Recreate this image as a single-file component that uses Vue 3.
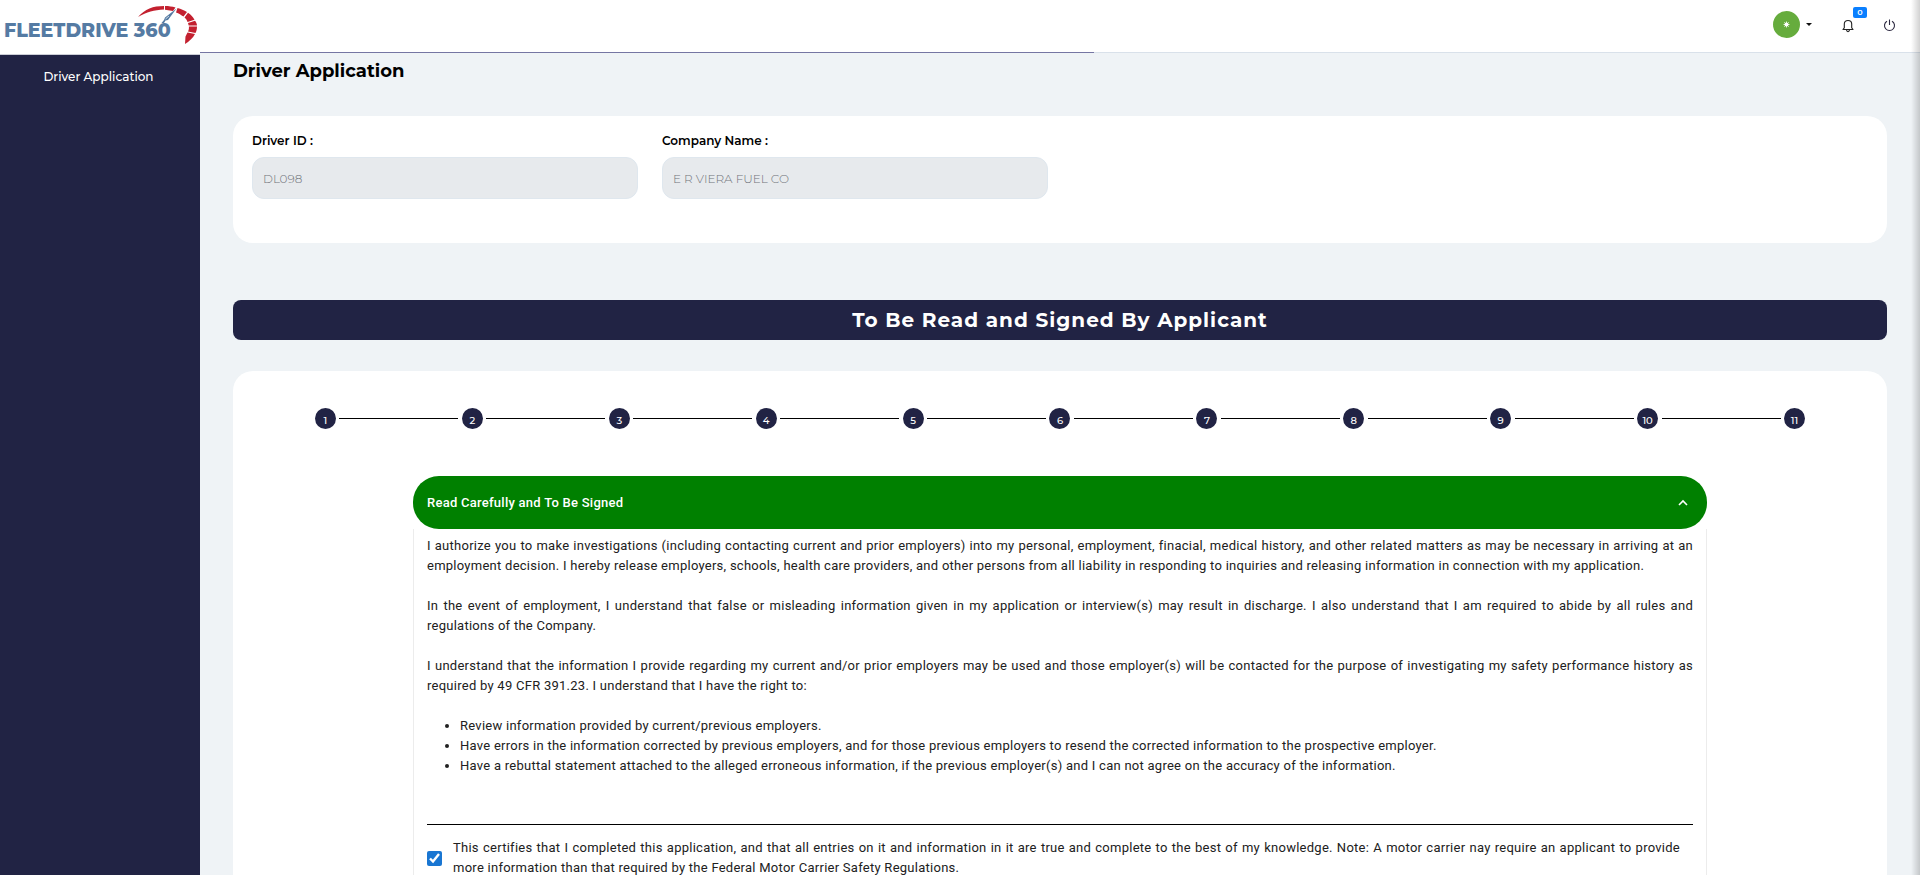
<script setup>
import { ref } from 'vue'

const steps = Array.from({ length: 11 }, (_, i) => i + 1)
const driverId = ref('DL098')
const company = ref('E R VIERA FUEL CO')
const certified = ref(true)
const open = ref(true)
</script>

<template>
  <div class="shell">
    <aside class="sidebar">
      <a class="brand" href="#">
        <span class="brand-name">FLEETDRIVE 360</span>
        <svg class="gauge" viewBox="136 4 64 42" width="64" height="42" aria-hidden="true">
          <path d="M138 17 C145 9 153 6 164 6 L164 9.500 C154 10 147 12 138 17Z" fill="#c3202f" />
          <path d="M165 6 C169 6 172 6.500 175.500 7.500 L173 11 L165 9.700Z" fill="#c3202f" />
          <path d="M177.500 8 C181 9 184 10 187 12 L183.500 16.500 C181 15 179 13.500 176 12.500Z" fill="#c3202f" />
          <path d="M188 12.700 C191 14.500 193 17 194.500 19.700 L187.500 22 C187 20 186 19 184.500 17.500Z" fill="#c3202f" />
          <path d="M195 20.700 C196 22 197 24 197 25.500 L188.700 25.500 L188 23Z" fill="#c3202f" />
          <path d="M197 26.500 C197 29 196.500 31 195.500 33 L188 31.500 C189 30 189 28 188.900 26.500Z" fill="#c3202f" />
          <path d="M195 34 C193 38 189 41.500 185 44 L185.500 36.500 L187.500 32.500Z" fill="#c3202f" />
          <path d="M176.500 8.500 L168 20 L165.500 20.500 L164 23 L161.500 23 L164 20 L165 17.500Z" fill="#557ba3" />
          <path d="M165.500 19 L169 16" stroke="#fff" stroke-width=".7" />
        </svg>
      </a>
      <nav class="menu">
        <a href="#" class="menu-link">Driver Application</a>
      </nav>
    </aside>

    <div class="content">
      <header class="topbar">
        <div class="tools">
          <button class="account" type="button" aria-label="Account">
            <span class="avatar">
              <svg viewBox="0 0 27 27" width="27" height="27">
                <circle cx="13.5" cy="13.5" r="2" fill="#fff" />
                <path d="M13.5 10.5v6M10.5 13.5h6M11.3 11.3l4.4 4.4M15.7 11.3l-4.4 4.4" stroke="#fff" stroke-width="1" opacity=".8" />
              </svg>
            </span>
            <svg class="caret" viewBox="0 0 6 3" width="6" height="3"><path d="M0 0h6L3 3z" fill="#111" /></svg>
          </button>
          <button class="bell" type="button" aria-label="Notifications">
            <svg viewBox="0 0 12 14" width="12" height="14" fill="none" stroke="#222" stroke-width="1.1">
              <path d="M1 10.5h10L9.7 8.7V5C9.700 2.800 8.300 1.500 6 1.500S2.300 2.800 2.300 5v3.700z" stroke-linejoin="round" />
              <path d="M4.500 11c.2 1.200.8 1.600 1.500 1.600s1.300-.4 1.500-1.600" />
            </svg>
            <span class="badge">0</span>
          </button>
          <button class="power" type="button" aria-label="Log out">
            <svg viewBox="0 0 13 13" width="13" height="13" fill="none" stroke="#2c2840" stroke-width="1.1">
              <path d="M4 2.200A5 5 0 1 0 9 2.200" />
              <path d="M6.500 .5v5.500" />
            </svg>
          </button>
        </div>
        <div class="progress"><div class="progress-bar"></div></div>
      </header>

      <main class="page">
        <h1 class="title">Driver Application</h1>

        <section class="card info">
          <div class="field">
            <label for="driver-id">Driver ID :</label>
            <input id="driver-id" v-model="driverId" type="text" disabled />
          </div>
          <div class="field">
            <label for="company">Company Name :</label>
            <input id="company" v-model="company" type="text" disabled />
          </div>
        </section>

        <h2 class="banner">To Be Read and Signed By Applicant</h2>

        <section class="card form">
          <ol class="steps">
            <li v-for="n in steps" :key="n" class="step">
              <span class="dot">{{ n }}</span>
            </li>
          </ol>

          <div class="panel">
            <button class="panel-head" type="button" :aria-expanded="open" @click="open = !open">
              <span>Read Carefully and To Be Signed</span>
              <svg viewBox="0 0 10 7" width="10" height="7" fill="none" stroke="#fff" stroke-width="1.6"><path d="M1 6l4-4 4 4" /></svg>
            </button>
            <div v-show="open" class="panel-body">
              <p>I authorize you to make investigations (including contacting current and prior employers) into my personal, employment, finacial, medical history, and other related matters as may be necessary in arriving at an employment decision. I hereby release employers, schools, health care providers, and other persons from all liability in responding to inquiries and releasing information in connection with my application.</p>
              <p>In the event of employment, I understand that false or misleading information given in my application or interview(s) may result in discharge. I also understand that I am required to abide by all rules and regulations of the Company.</p>
              <p>I understand that the information I provide regarding my current and/or prior employers may be used and those employer(s) will be contacted for the purpose of investigating my safety performance history as required by 49 CFR 391.23. I understand that I have the right to:</p>
              <ul>
                <li>Review information provided by current/previous employers.</li>
                <li>Have errors in the information corrected by previous employers, and for those previous employers to resend the corrected information to the prospective employer.</li>
                <li>Have a rebuttal statement attached to the alleged erroneous information, if the previous employer(s) and I can not agree on the accuracy of the information.</li>
              </ul>
              <hr />
              <div class="certify">
                <input id="certify" v-model="certified" type="checkbox" />
                <label for="certify">This certifies that I completed this application, and that all entries on it and information in it are true and complete to the best of my knowledge. Note: A motor carrier nay require an applicant to provide more information than that required by the Federal Motor Carrier Safety Regulations.</label>
              </div>
            </div>
          </div>
        </section>
      </main>
    </div>
    <div class="edge"></div>
  </div>
</template>

<style>
body {
  margin: 0;
  background: #eff3f6;
}
</style>

<style scoped>
* {
  box-sizing: border-box;
}
.shell {
  position: relative;
  display: flex;
  height: 100vh;
  overflow: hidden;
  background: #eff3f6;
  color: #000;
  font-family: Montserrat, Inter, sans-serif;
}
button {
  padding: 0;
  border: 0;
  background: none;
  font: inherit;
  cursor: pointer;
}
.sidebar {
  flex: 0 0 200px;
  display: flex;
  flex-direction: column;
  background: #212344;
}
.brand {
  position: relative;
  height: 55px;
  padding: 21px 0 0 4px;
  background: #fff;
  border-bottom: 1px solid #ccced6;
  color: #557ba3;
  font-size: 19px;
  font-weight: 800;
  line-height: 20px;
  text-decoration: none;
  white-space: nowrap;
}
.gauge {
  position: absolute;
  left: 136px;
  top: 4px;
}
.menu {
  padding-top: 11px;
  padding-right: 3px;
  text-align: center;
}
.menu-link {
  color: #fff;
  font-size: 12px;
  font-weight: 500;
  line-height: 20px;
  text-decoration: none;
}
.content {
  flex: 1;
  min-width: 0;
  display: flex;
  flex-direction: column;
}
.topbar {
  flex: none;
  background: #fff;
}
.tools {
  display: flex;
  justify-content: flex-end;
  align-items: center;
  height: 52px;
  padding: 0 24px 4px 0;
}
.account {
  display: flex;
  align-items: center;
  gap: 6px;
  margin-right: 30px;
}
.avatar {
  width: 27px;
  height: 27px;
  border-radius: 50%;
  background: #66ac3d;
}
.avatar svg,
.bell svg,
.power svg {
  display: block;
}
.bell {
  position: relative;
  margin: 3px 29px 0 0;
}
.badge {
  position: absolute;
  left: 11px;
  top: -12px;
  width: 14px;
  height: 11px;
  border-radius: 2px;
  background: #0a7fff;
  color: #fff;
  font-size: 8px;
  font-weight: 600;
  line-height: 10px;
  text-align: center;
}
.power {
  margin-top: 3px;
}
.progress {
  height: 1px;
  background: #d9e1ea;
}
.progress-bar {
  width: 52%;
  height: 1px;
  background: #7576a3;
}
.page {
  flex: 1;
  min-height: 0;
  padding: 6px 33px 0;
  overflow-y: auto;
  scrollbar-width: none;
}
.title {
  margin: 0 0 33px;
  font-size: 18px;
  font-weight: 700;
  line-height: 24px;
}
.card {
  background: #fff;
  border-radius: 20px;
}
.info {
  display: grid;
  grid-template-columns: repeat(4, 1fr);
  gap: 24px;
  height: 127px;
  padding: 15px 19px;
}
.field {
  display: flex;
  flex-direction: column;
  gap: 6px;
}
.field label {
  font-size: 12px;
  font-weight: 600;
  line-height: 20px;
}
.field input {
  width: 100%;
  height: 42px;
  padding: 0 10px;
  border: 1px solid #dfe7ee;
  border-radius: 12px;
  background: #e7eaed;
  color: #70747a;
  font: 300 12px/20px Montserrat, Inter, sans-serif;
}
.banner {
  margin: 57px 0 31px;
  border-radius: 8px;
  background: #212344;
  color: #fff;
  font-size: 20px;
  font-weight: 700;
  line-height: 40px;
  letter-spacing: 1px;
  text-align: center;
}
.form {
  padding: 37px 180px 60px;
}
.steps {
  display: flex;
  margin: 0 -161px 47px;
  padding: 0;
  list-style: none;
}
.step {
  position: relative;
  flex: 1;
  display: flex;
  justify-content: center;
}
.step:not(:last-child)::after {
  content: "";
  position: absolute;
  left: calc(50% + 14px);
  right: calc(14px - 50%);
  top: 10px;
  height: 1px;
  background: #000;
}
.dot {
  width: 21px;
  height: 21px;
  border-radius: 50%;
  background: #212344;
  color: #fff;
  font-size: 10px;
  font-weight: 500;
  line-height: 25px;
  text-align: center;
}
.panel {
  font-family: Roboto, sans-serif;
  font-size: 13px;
  line-height: 20px;
  letter-spacing: 0.02em;
  color: #212121;
}
.panel-head {
  display: flex;
  width: 100%;
  height: 53px;
  align-items: center;
  justify-content: space-between;
  padding: 0 19px 0 14px;
  border-radius: 26px;
  background: #008000;
  color: #fff;
  font-weight: 500;
  letter-spacing: inherit;
}
.panel-body {
  padding: 7px 13px 20px;
  border: 1px solid #ececec;
  border-top: 0;
}
.panel-body p {
  margin: 0 0 20px;
  text-align: justify;
}
.panel-body ul {
  margin: 0;
  padding: 0 0 0 33px;
}
.panel-body hr {
  margin: 48px 0 13px;
  border: 0;
  border-top: 1px solid #000;
}
.certify {
  display: flex;
  align-items: center;
  gap: 11px;
  padding-right: 13px;
}
.certify input {
  flex: none;
  width: 15px;
  height: 15px;
  margin: 0;
  accent-color: #1976d2;
}
.certify label {
  text-align: justify;
}
.edge {
  position: absolute;
  top: 0;
  right: 0;
  bottom: 0;
  width: 9px;
  background: linear-gradient(to right, rgba(0, 0, 0, 0), rgba(0, 0, 0, 0.18));
  pointer-events: none;
}
</style>
